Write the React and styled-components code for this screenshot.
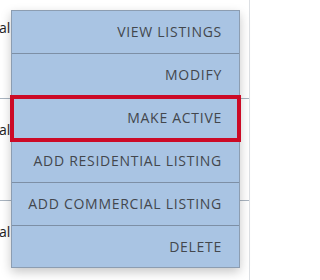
import React from "react";
import styled, { createGlobalStyle } from "styled-components";

const Global = createGlobalStyle`
  html, body { margin: 0; padding: 0; background: #fff; }
  body { font-family: "Open Sans", "Liberation Sans", sans-serif; }
`;

const Page = styled.div`
  position: relative;
  width: 251px;
  height: 280px;
  overflow: hidden;
  background: #fff;
`;

const Table = styled.div`
  width: 249px;
  border-right: 1px solid #dcdfe3;
  margin-top: -3px;
  height: 290px;
`;

const Row = styled.div`
  height: 101px;
  border-bottom: 1px solid #a9b4c0;
  display: flex;
  align-items: flex-start;
`;

const Cell = styled.div`
  white-space: nowrap;
  padding-top: 22px;
  margin-left: -1px;
  font-size: 14px;
  line-height: 18px;
  color: #222;
`;

const Menu = styled.ul`
  position: absolute;
  left: 11px;
  top: 10px;
  width: 227px;
  margin: 0;
  padding: 0;
  list-style: none;
  background: #a9c4e3;
  border: 1px solid #8c9db1;
  box-shadow: 0 4px 10px rgba(0, 0, 0, 0.22);
`;

const Item = styled.li`
  height: 42px;
  display: flex;
  align-items: center;
  justify-content: flex-end;
  padding-right: 17px;
  padding-bottom: 1px;
  box-sizing: border-box;
  font-family: "Open Sans", "Liberation Sans", sans-serif;
  font-size: 14px;
  letter-spacing: 0.72px;
  color: #43474d;
  border-bottom: 1px solid #7d8fa5;
  height: 43px;
  &:last-child { border-bottom: none; height: 41px; }
  ${(p) =>
    p.$active &&
    `
    position: relative;
    outline: 4px solid #cc0a26;
    outline-offset: -2px;
    z-index: 1;
  `}
`;

const items = [
  "VIEW LISTINGS",
  "MODIFY",
  "MAKE ACTIVE",
  "ADD RESIDENTIAL LISTING",
  "ADD COMMERCIAL LISTING",
  "DELETE",
];

export default function App() {
  return (
    <>
      <Global />
      <Page>
        <Table>
          <Row><Cell>al</Cell></Row>
          <Row><Cell>al</Cell></Row>
          <Row><Cell>al</Cell></Row>
        </Table>
        <Menu>
          {items.map((t, i) => (
            <Item key={t} $active={i === 2}>{t}</Item>
          ))}
        </Menu>
      </Page>
    </>
  );
}
